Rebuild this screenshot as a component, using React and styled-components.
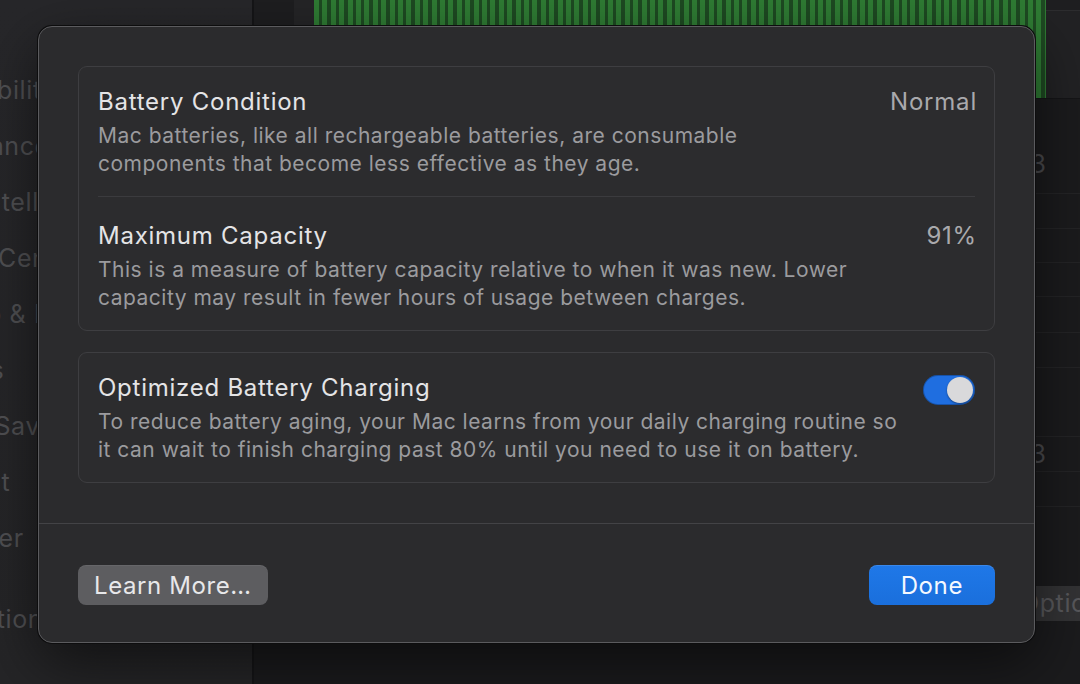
import {useState} from 'react';
import styled, {createGlobalStyle} from 'styled-components';

const GlobalStyle = createGlobalStyle`
  html, body {
    margin: 0;
    padding: 0;
    background: #1b1b1d;
  }
  body {
    font-family: Inter, "Noto Sans", "Liberation Sans", sans-serif;
    -webkit-font-smoothing: antialiased;
  }
`;

const Screen = styled.div`
  position: relative;
  width: 1080px;
  height: 684px;
  overflow: hidden;
  display: flex;
  background: #1b1b1d;
`;

/* ---------- dimmed window behind the sheet ---------- */

const Sidebar = styled.aside`
  width: 252px;
  flex-shrink: 0;
  background: linear-gradient(180deg, #27272a 0%, #252527 100%);
  border-right: 2px solid #151517;
  ul {
    list-style: none;
    margin: 0 0 0 -100px;
    padding: 72px 0 0;
  }
`;

const SideItem = styled.li`
  height: 56px;
  line-height: 36px;
  font-size: 25px;
  letter-spacing: 0.6px;
  color: #505053;
  white-space: nowrap;
  margin-top: ${props => (props.$gap ? '25px' : '0')};
`;

const Main = styled.main`
  flex: 1;
  display: flex;
  flex-direction: column;
  min-width: 0;
`;

const ChartRow = styled.div`
  display: flex;
  height: 98px;
  border-bottom: 1px solid #151517;
`;

const Gutter = styled.div`
  width: ${props => props.$w}px;
  background: ${props => props.$bg};
  flex-shrink: 0;
`;

const Bars = styled.div`
  width: 732px;
  flex-shrink: 0;
  background: repeating-linear-gradient(
    90deg,
    #2f7c34 0px,
    #2f7c34 5px,
    #1e4a22 5px,
    #1e4a22 8.4px
  );
`;

const ChartRest = styled.div`
  flex: 1;
  background: #222224;
  border-top: 10px solid #1f1f21;
  box-shadow: inset 0 45px 0 -44px #2d2d2f;
`;

const Table = styled.div`
  display: flex;
  flex-direction: column;
`;

const TableRow = styled.div`
  height: ${props => props.$h}px;
  border-bottom: 1px solid #242426;
  display: flex;
  align-items: ${props => (props.$top ? 'flex-start' : 'center')};
  justify-content: flex-end;
  padding-right: 34px;
  font-size: 25px;
  color: #4a4a4d;
  box-sizing: border-box;
  padding-top: ${props => (props.$top ? '50px' : '0')};
`;

const BackFooter = styled.div`
  padding: 79px 0 0 752px;
`;

const BackButton = styled.div`
  height: 35px;
  line-height: 35px;
  width: 160px;
  padding-left: 14px;
  background: #333335;
  border-radius: 6px;
  color: #59595c;
  font-size: 25px;
  letter-spacing: 0.6px;
  white-space: nowrap;
`;

/* ---------- battery health sheet ---------- */

const Sheet = styled.section`
  position: absolute;
  left: 38px;
  top: 26px;
  width: 997px;
  height: 617px;
  box-sizing: border-box;
  background: #2b2b2d;
  border: 1px solid #5b5b5e;
  border-radius: 14px;
  box-shadow: 0 0 0 1px #0d0d0e, 0 20px 60px rgba(0, 0, 0, 0.55);
  display: flex;
  flex-direction: column;
  overflow: hidden;
`;

const SheetBody = styled.div`
  flex: 1;
  padding: 39px 39px 40px;
  display: flex;
  flex-direction: column;
  gap: 21px;
`;

const Group = styled.div`
  border: 1px solid #3e3e41;
  border-radius: 9px;
  background: #2c2c2e;
  padding: 0 19px;
`;

const Row = styled.div`
  display: flex;
  align-items: flex-start;
  gap: 24px;
  padding: 20px 0 18px;
  & + & {
    border-top: 1px solid #3b3b3e;
    padding-top: 24px;
  }
`;

const RowText = styled.div`
  flex: 1;
  min-width: 0;
`;

const Title = styled.div`
  font-size: 24px;
  line-height: 30px;
  letter-spacing: 0.75px;
  color: #e4e4e6;
`;

const Desc = styled.p`
  margin: 5px 0 0;
  font-size: 21px;
  line-height: 28px;
  letter-spacing: 0.5px;
  color: #9b9b9e;
  white-space: nowrap;
`;

const Value = styled.div`
  font-size: 24px;
  line-height: 30px;
  letter-spacing: 0.8px;
  color: #a9a9ac;
  white-space: nowrap;
  margin-right: -2px;
`;

const Switch = styled.button`
  margin-top: 2px;
  width: 52px;
  height: 30px;
  border: none;
  border-radius: 15px;
  padding: 2px;
  background: ${props => (props.$on ? '#1f6ee0' : '#4a4a4d')};
  box-shadow: inset 0 0 0 1px rgba(0, 0, 0, 0.25);
  display: flex;
  justify-content: ${props => (props.$on ? 'flex-end' : 'flex-start')};
  cursor: pointer;
  span {
    width: 26px;
    height: 26px;
    border-radius: 50%;
    background: #d9d9db;
    box-shadow: 0 1px 2px rgba(0, 0, 0, 0.4);
  }
`;

const SheetFooter = styled.footer`
  border-top: 1px solid #434346;
  padding: 41px 39px 38px;
  display: flex;
  justify-content: space-between;
`;

const Button = styled.button`
  height: 40px;
  border: none;
  border-radius: 8px;
  padding: 0 ${props => props.$pad}px;
  font-family: inherit;
  font-size: 24px;
  letter-spacing: 0.6px;
  color: ${props => (props.$primary ? '#f4f8ff' : '#e8e8ea')};
  background: ${props => (props.$primary ? 'linear-gradient(180deg, #1f78e8 0%, #1a6fdc 100%)' : '#5d5d60')};
  box-shadow: ${props => (props.$primary ? 'inset 0 1px 0 rgba(255,255,255,0.12)' : 'inset 0 1px 0 rgba(255,255,255,0.06)')};
  cursor: pointer;
`;

const sidebarItems = [
  'Accessibility',
  'Appearance',
  'Apple Intelligence & Siri',
  'Control Center',
  'Desktop & Dock',
  'Displays',
  'Screen Saver',
  'Spotlight',
  'Wallpaper',
];

const App = () => {
  const [optimized, setOptimized] = useState(true);

  return (
    <>
      <GlobalStyle />
      <Screen>
        <Sidebar>
          <ul>
            {sidebarItems.map(item => (
              <SideItem key={item}>{item}</SideItem>
            ))}
            <SideItem $gap>Notifications</SideItem>
          </ul>
        </Sidebar>
        <Main>
          <ChartRow>
            <Gutter $w={40} $bg='#1e1e20' />
            <Gutter $w={20} $bg='#252527' />
            <Bars />
            <ChartRest />
          </ChartRow>
          <Table>
            <TableRow $h={95} $top>3</TableRow>
            <TableRow $h={35} />
            <TableRow $h={34} />
            <TableRow $h={34} />
            <TableRow $h={36} />
            <TableRow $h={35} />
            <TableRow $h={69} />
            <TableRow $h={35}>3</TableRow>
            <TableRow $h={35} />
          </Table>
          <BackFooter>
            <BackButton>Options…</BackButton>
          </BackFooter>
        </Main>

        <Sheet>
          <SheetBody>
            <Group>
              <Row>
                <RowText>
                  <Title>Battery Condition</Title>
                  <Desc>
                    Mac batteries, like all rechargeable batteries, are consumable
                    <br />
                    components that become less effective as they age.
                  </Desc>
                </RowText>
                <Value>Normal</Value>
              </Row>
              <Row>
                <RowText>
                  <Title>Maximum Capacity</Title>
                  <Desc>
                    This is a measure of battery capacity relative to when it was new. Lower
                    <br />
                    capacity may result in fewer hours of usage between charges.
                  </Desc>
                </RowText>
                <Value>91%</Value>
              </Row>
            </Group>
            <Group>
              <Row>
                <RowText>
                  <Title>Optimized Battery Charging</Title>
                  <Desc>
                    To reduce battery aging, your Mac learns from your daily charging routine so
                    <br />
                    it can wait to finish charging past 80% until you need to use it on battery.
                  </Desc>
                </RowText>
                <Switch
                  $on={optimized}
                  aria-pressed={optimized}
                  onClick={() => setOptimized(!optimized)}
                >
                  <span />
                </Switch>
              </Row>
            </Group>
          </SheetBody>
          <SheetFooter>
            <Button $pad={16}>Learn More…</Button>
            <Button $pad={32} $primary>Done</Button>
          </SheetFooter>
        </Sheet>
      </Screen>
    </>
  );
};

export default App;
